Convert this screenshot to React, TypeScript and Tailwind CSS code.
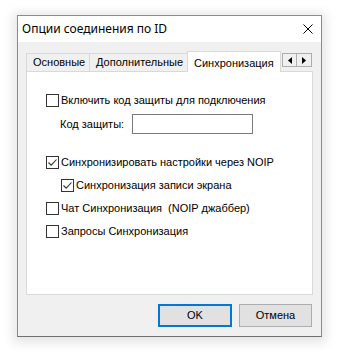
import React from "react";

const font = { fontFamily: '"Noto Sans", "Liberation Sans", sans-serif' };
const body = { fontFamily: '"Liberation Sans", Arial, sans-serif' };

function Box({ checked }: { checked?: boolean }) {
  return (
    <span className="w-[13px] h-[13px] border border-[#333333] bg-white flex items-center justify-center shrink-0">
      {checked && (
        <svg width="11" height="11" viewBox="0 0 11 11">
          <path d="M1.5 5.5 L4.2 8.2 L9.5 2.5" fill="none" stroke="#333" strokeWidth="1.1" />
        </svg>
      )}
    </span>
  );
}

function Check({ label, checked, className = "" }: { label: string; checked?: boolean; className?: string }) {
  return (
    <div className={"flex items-center h-[23px] " + className}>
      <Box checked={checked} />
      <span className="ml-[2px] text-[11px] text-black leading-none whitespace-pre" style={body}>{label}</span>
    </div>
  );
}

export default function App() {
  return (
    <div className="w-[343px] h-[359px] bg-white pl-[17px] pt-[15px]" style={font}>
      <div className="w-[305px] h-[322px] border border-[#8c8c8c] border-b-[#6f6f6f] bg-[#f0f0f0] flex flex-col shadow-[0_2px_10px_4px_rgba(0,0,0,0.10)]">
        <div className="h-[26px] bg-white flex items-center justify-between pl-[4px] pr-[8px] shrink-0">
          <span className="text-[12px] text-black">Опции соединения по ID</span>
          <svg width="10" height="10" viewBox="0 0 10 10">
            <path d="M0.5 0.5 L9.5 9.5 M9.5 0.5 L0.5 9.5" stroke="#000" strokeWidth="1" />
          </svg>
        </div>
        <div className="pl-[8px] pr-[8px] pt-[8px] flex flex-col" style={body}>
          <div className="flex items-end h-[21px] relative">
            <div className="h-[18px] px-[6px] border border-b-0 border-[#d9d9d9] flex items-center text-[11px] text-black w-[64px]">Основные</div>
            <div className="h-[18px] px-[6px] border border-b-0 border-l-0 border-[#d9d9d9] flex items-center text-[11px] text-black w-[98px]">Дополнительные</div>
            <div className="h-[21px] px-[6px] border border-b-0 border-[#d9d9d9] bg-white flex items-start pt-[3px] text-[11px] text-black w-[94px] -ml-[1px] relative z-10 -mb-[1px]">Синхронизация</div>
            <div className="flex self-start mt-[3px] ml-[1px]">
              <div className="w-[15px] h-[14px] border border-[#adadad] bg-[#f0f0f0] flex items-center justify-center">
                <svg width="4" height="7" viewBox="0 0 4 7"><path d="M4 0 L0 3.5 L4 7 Z" fill="#000" /></svg>
              </div>
              <div className="w-[15px] h-[14px] border border-l-0 border-[#adadad] bg-[#f0f0f0] flex items-center justify-center">
                <svg width="4" height="7" viewBox="0 0 4 7"><path d="M0 0 L4 3.5 L0 7 Z" fill="#000" /></svg>
              </div>
            </div>
          </div>
          <div className="h-[224px] w-[287px] bg-white border border-[#d9d9d9] pl-[19px] pt-[17px] flex flex-col">
            <Check label="Включить код защиты для подключения" />
            <div className="flex items-center mt-[2px] pl-[14px]">
              <span className="text-[11px] text-black">Код защиты:</span>
              <div className="ml-[8px] w-[121px] h-[20px] border border-[#7a7a7a] bg-white" />
            </div>
            <Check label="Синхронизировать настройки через NOIP" checked className="mt-[17px]" />
            <Check label="Синхронизация записи экрана" checked className="pl-[15px]" />
            <Check label="Чат Синхронизация  (NOIP джаббер)" />
            <Check label="Запросы Синхронизация" />
          </div>
          <div className="flex justify-end gap-[7px] mt-[9px] pr-[1px]">
            <button className="w-[74px] h-[23px] bg-[#e1e1e1] border-2 border-[#0078d7] text-[11px] text-black">OK</button>
            <button className="w-[73px] h-[23px] bg-[#e1e1e1] border border-[#adadad] text-[11px] text-black">Отмена</button>
          </div>
        </div>
      </div>
    </div>
  );
}
